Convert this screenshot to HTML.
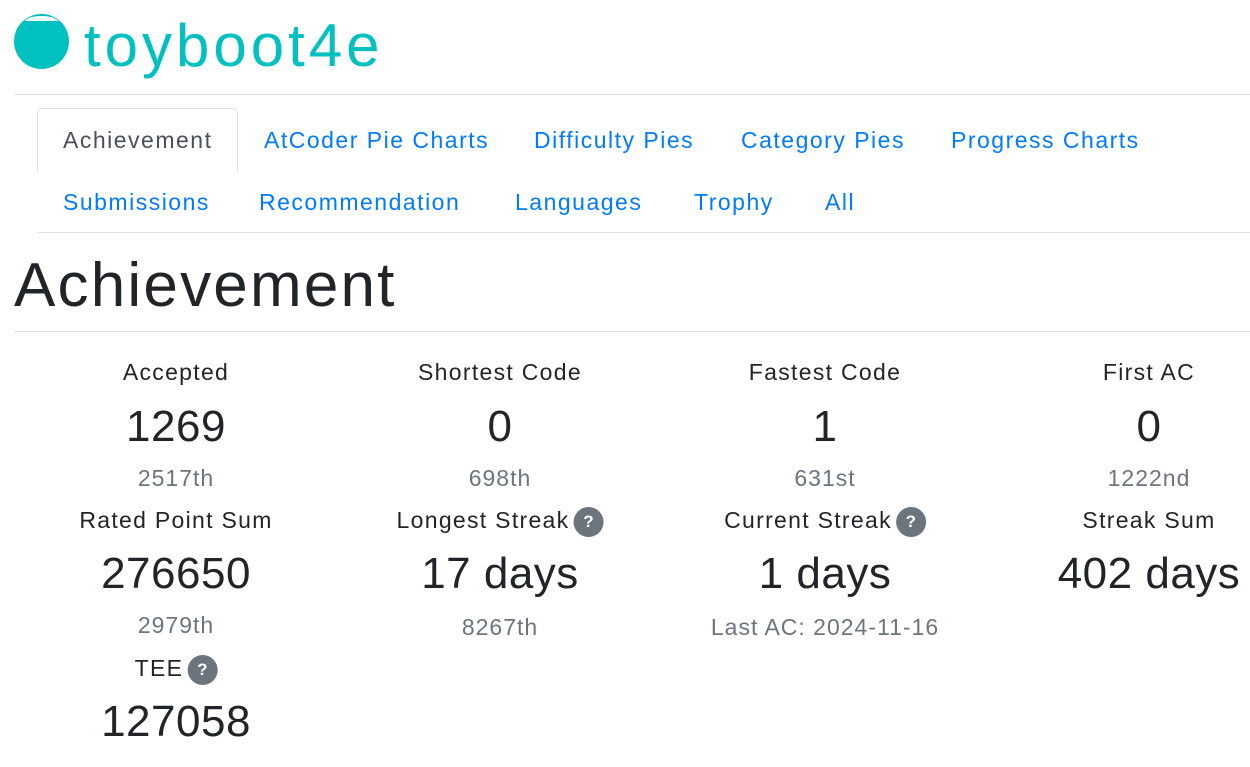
<!DOCTYPE html>
<html><head><meta charset="utf-8"><style>
body{margin:0;width:1250px;height:767px;background:#fff;font-family:"Liberation Sans",sans-serif;color:#212529;position:relative;overflow:hidden}
.a{position:absolute;white-space:nowrap}
.c{position:absolute;transform:translateX(-50%);white-space:nowrap;text-align:center}
.nav{position:absolute;font-size:23px;color:#007bff;line-height:30px;letter-spacing:1.5px}
.lab{font-size:23px;line-height:30px;letter-spacing:1.3px}
.val{font-size:44px;line-height:50px;letter-spacing:0.5px}
.rk{font-size:23px;line-height:30px;color:#6c757d;letter-spacing:1px}
.q{display:inline-block;width:30px;height:30px;border-radius:50%;background:#6c757d;color:#fff;font-size:17px;font-weight:bold;line-height:30px;text-align:center;vertical-align:middle;margin-left:4px;letter-spacing:0}
.hr{position:absolute;height:1px;background:#dee2e6}
</style></head><body>
<div class="a" style="left:14px;top:14px;width:55px;height:55px;border-radius:50%;background:#00c0c0;overflow:hidden"><div style="position:absolute;left:10px;top:2px;width:35px;height:14px;background:#fff;border-radius:50%"></div><div style="position:absolute;left:0;top:7px;width:55px;height:12px;background:#00c0c0"></div></div>
<div class="a" style="left:84px;top:8px;font-size:60px;line-height:76px;color:#00c0c0;letter-spacing:4px">toyboot4e</div>
<div class="hr" style="left:14px;top:94px;width:1236px"></div>
<div class="a" style="left:37px;top:108px;width:199px;height:63px;border:1px solid #dee2e6;border-bottom:none;border-radius:5px 5px 0 0;background:#fff"></div>
<div class="nav" style="left:63px;top:125px;color:#495057">Achievement</div>
<div class="nav" style="left:264px;top:125px">AtCoder Pie Charts</div>
<div class="nav" style="left:534px;top:125px">Difficulty Pies</div>
<div class="nav" style="left:741px;top:125px">Category Pies</div>
<div class="nav" style="left:951px;top:125px">Progress Charts</div>
<div class="nav" style="left:63px;top:187px">Submissions</div>
<div class="nav" style="left:259px;top:187px">Recommendation</div>
<div class="nav" style="left:515px;top:187px">Languages</div>
<div class="nav" style="left:694px;top:187px">Trophy</div>
<div class="nav" style="left:825px;top:187px">All</div>
<div class="hr" style="left:37px;top:232px;width:1213px"></div>
<div class="a" style="left:14px;top:248px;font-size:62px;line-height:76px;letter-spacing:2.2px">Achievement</div>
<div class="hr" style="left:14px;top:331px;width:1236px"></div>

<div class="c lab" style="left:176px;top:357px">Accepted</div>
<div class="c val" style="left:176px;top:402px">1269</div>
<div class="c rk" style="left:176px;top:463px">2517th</div>
<div class="c lab" style="left:176px;top:505px">Rated Point Sum</div>
<div class="c val" style="left:176px;top:549px">276650</div>
<div class="c rk" style="left:176px;top:610px">2979th</div>
<div class="c lab" style="left:176px;top:653px">TEE<span class="q">?</span></div>
<div class="c val" style="left:176px;top:697px">127058</div>

<div class="c lab" style="left:500px;top:357px">Shortest Code</div>
<div class="c val" style="left:500px;top:402px">0</div>
<div class="c rk" style="left:500px;top:463px">698th</div>
<div class="c lab" style="left:500px;top:505px">Longest Streak<span class="q">?</span></div>
<div class="c val" style="left:500px;top:549px">17 days</div>
<div class="c rk" style="left:500px;top:612px">8267th</div>

<div class="c lab" style="left:825px;top:357px">Fastest Code</div>
<div class="c val" style="left:825px;top:402px">1</div>
<div class="c rk" style="left:825px;top:463px">631st</div>
<div class="c lab" style="left:825px;top:505px">Current Streak<span class="q">?</span></div>
<div class="c val" style="left:825px;top:549px">1 days</div>
<div class="c rk" style="left:825px;top:612px">Last AC: 2024-11-16</div>

<div class="c lab" style="left:1149px;top:357px">First AC</div>
<div class="c val" style="left:1149px;top:402px">0</div>
<div class="c rk" style="left:1149px;top:463px">1222nd</div>
<div class="c lab" style="left:1149px;top:505px">Streak Sum</div>
<div class="c val" style="left:1149px;top:549px">402 days</div>
</body></html>
